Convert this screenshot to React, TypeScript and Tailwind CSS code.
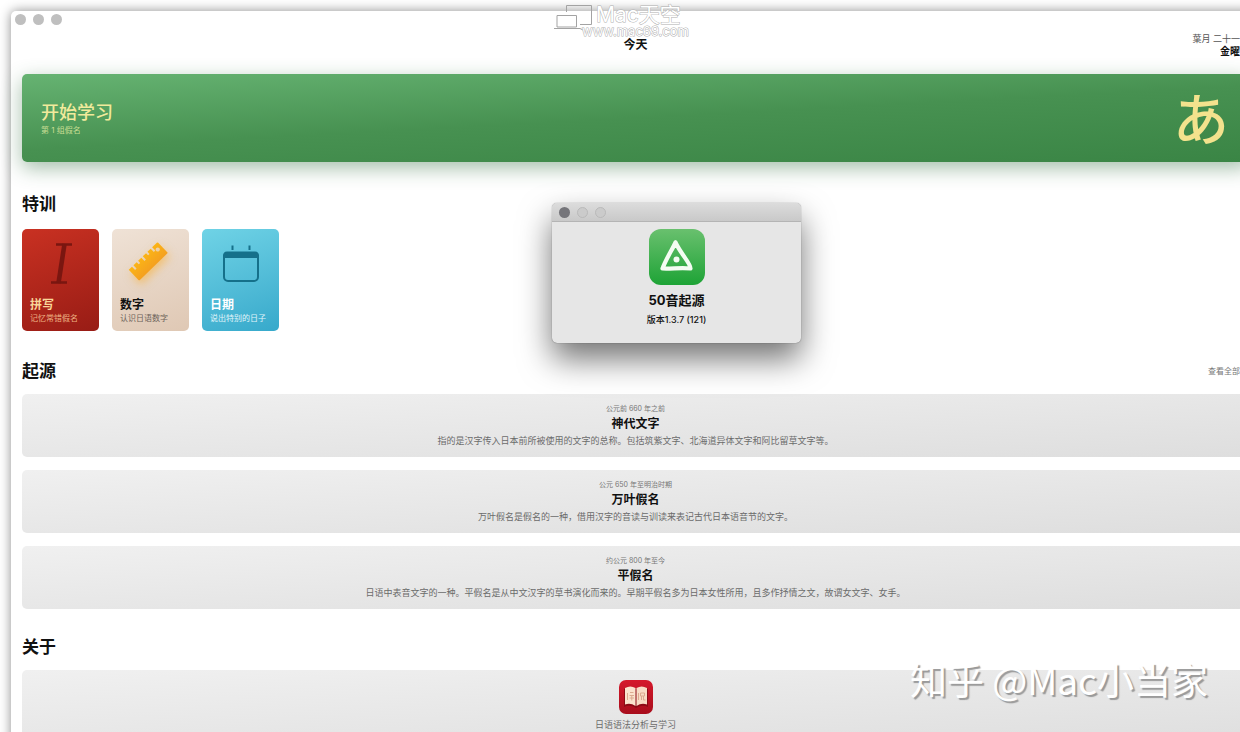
import type { ReactNode } from 'react';
import { clsx } from 'clsx';

interface Training {
  title: string;
  subtitle: string;
  cardClass: string;
  titleClass: string;
  subtitleClass: string;
  icon: ReactNode;
}

interface Origin {
  period: string;
  title: string;
  description: string;
}

function ItalicIcon() {
  return (
    <svg width="56" height="48" viewBox="0 0 56 48" fill="none" stroke="#7a1610" aria-hidden="true">
      <path d="M23 5.5H39M18 43.5H34" strokeWidth="2.6" />
      <path d="M31.5 5L25.5 44" strokeWidth="4.6" />
    </svg>
  );
}

function RulerIcon() {
  return (
    <svg width="56" height="48" viewBox="0 0 56 48" className="overflow-visible drop-shadow-[2px_4px_4px_rgba(250,170,30,0.5)]" aria-hidden="true">
      <defs>
        <linearGradient id="ruler" x1="0" y1="0" x2="0" y2="1">
          <stop offset="0" stopColor="#fbb416" />
          <stop offset="1" stopColor="#f4a01f" />
        </linearGradient>
      </defs>
      <g transform="translate(25 22) rotate(-44)">
        <path
          fill="url(#ruler)"
          fillRule="evenodd"
          d="M-20 -7H-15.5V-2.5H-13.5V-7H-9V-4H-7V-7H-2.5V-2.5H-.5V-7H4V-4H6V-7H10.5V-2.5H12.5V-7H19Q20 -7 20 -6V7Q20 8 19 8H-19Q-20 8 -20 7ZM15 -3.5A2 2 0 1 0 15 .5A2 2 0 1 0 15 -3.5Z"
        />
      </g>
    </svg>
  );
}

function CalendarIcon() {
  return (
    <svg width="56" height="48" viewBox="0 0 56 48" fill="none" aria-hidden="true">
      <rect x="11" y="14" width="34" height="28" rx="4" stroke="#15708a" strokeWidth="2" />
      <path d="M10 19V17Q10 12.5 14 12.5H42Q46 12.5 46 17V19Z" fill="#15708a" />
      <path d="M19.5 6.5V11M36.5 6.5V11" stroke="#15708a" strokeWidth="2" />
    </svg>
  );
}

function AppIcon() {
  return (
    <svg width="56" height="56" viewBox="0 0 56 56" fill="none" aria-hidden="true">
      <defs>
        <linearGradient id="app" x1="0" y1="0" x2="0" y2="1">
          <stop offset="0" stopColor="#69c06e" />
          <stop offset="1" stopColor="#1ea336" />
        </linearGradient>
      </defs>
      <rect width="56" height="56" rx="12" fill="url(#app)" />
      <path
        d="M26.5 13.5C23 21 17 30 13.5 39.5C22 40 32 38.5 41.5 39.5C42 35 32 25 26.5 13.5"
        stroke="#f4fcf2"
        strokeWidth="4.2"
        strokeLinecap="round"
        strokeLinejoin="round"
      />
      <circle cx="27.5" cy="30.5" r="3" fill="#f4fcf2" />
    </svg>
  );
}

function DictionaryIcon() {
  return (
    <svg width="34" height="34" viewBox="0 0 34 34" fill="none" aria-hidden="true">
      <defs>
        <linearGradient id="book" x1="0" y1="0" x2="0" y2="1">
          <stop offset="0" stopColor="#d5192b" />
          <stop offset="1" stopColor="#a80d1c" />
        </linearGradient>
      </defs>
      <rect width="34" height="34" rx="7" fill="url(#book)" />
      <path d="M5 27V9Q11 5 17 9Q23 5 29 9V27Q23 24 17 28Q11 24 5 27Z" fill="#8d0a15" />
      <path d="M6 24.5V8Q11.5 5 16.5 8V26Q11.5 22.5 6 24.5Z" fill="#fbe3cd" />
      <path d="M28 24.5V8Q22.5 5 17.5 8V26Q22.5 22.5 28 24.5Z" fill="#f8dcc5" />
      <path d="M8.5 13V20M11 12.5H14.5M10.5 15.5H15M12.8 15.5V20.5M10.5 18H15" stroke="#dcab90" />
      <path d="M19.5 13V20M21.5 13H25.5V16H21.5ZM22.5 16V20M24.5 16V20H26.5" stroke="#dcab90" />
    </svg>
  );
}

const trainings: Training[] = [
  {
    title: '拼写',
    subtitle: '记忆常错假名',
    cardClass: 'from-[#c93122] to-[#981c15]',
    titleClass: 'text-[#f9d79a]',
    subtitleClass: 'text-[#eeb184]',
    icon: <ItalicIcon />,
  },
  {
    title: '数字',
    subtitle: '认识日语数字',
    cardClass: 'from-[#efe2d6] to-[#dfc8b4]',
    titleClass: 'text-[#111111]',
    subtitleClass: 'text-[#6c6259]',
    icon: <RulerIcon />,
  },
  {
    title: '日期',
    subtitle: '说出特别的日子',
    cardClass: 'from-[#6fd3e6] to-[#36a9cb]',
    titleClass: 'text-white',
    subtitleClass: 'text-[#e0f5fa]',
    icon: <CalendarIcon />,
  },
];

const origins: Origin[] = [
  {
    period: '公元前 660 年之前',
    title: '神代文字',
    description: '指的是汉字传入日本前所被使用的文字的总称。包括筑紫文字、北海道异体文字和阿比留草文字等。',
  },
  {
    period: '公元 650 年至明治时期',
    title: '万叶假名',
    description: '万叶假名是假名的一种，借用汉字的音读与训读来表记古代日本语音节的文字。',
  },
  {
    period: '约公元 800 年至今',
    title: '平假名',
    description: '日语中表音文字的一种。平假名是从中文汉字的草书演化而来的。早期平假名多为日本女性所用，且多作抒情之文，故谓女文字、女手。',
  },
];

function WindowButtons({ dialog = false }: { dialog?: boolean }) {
  return (
    <div className="flex gap-[7px]">
      {['关闭', '最小化', '缩放'].map((label, i) => (
        <button
          key={label}
          aria-label={label}
          className={clsx(
            'size-[11px] rounded-full',
            !dialog && 'bg-[#bfbfbf]',
            dialog && i === 0 && 'bg-[#75757a]',
            dialog && i > 0 && 'border border-[#b9b9b9] bg-[#cbcbcb]',
          )}
        />
      ))}
    </div>
  );
}

function SectionTitle({ children }: { children: ReactNode }) {
  return <h2 className="text-[17px] leading-6 font-bold">{children}</h2>;
}

function TrainingCard({ item }: { item: Training }) {
  return (
    <button
      className={clsx(
        'flex h-[102px] w-[77px] flex-col rounded-[5px] bg-linear-160 px-2 pt-[10px] text-left',
        item.cardClass,
      )}
    >
      <span className="self-center">{item.icon}</span>
      <span className={clsx('mt-[10px] text-[12px] leading-4 font-bold', item.titleClass)}>{item.title}</span>
      <span className={clsx('text-[8px] leading-[10px] whitespace-nowrap', item.subtitleClass)}>{item.subtitle}</span>
    </button>
  );
}

function OriginCard({ item }: { item: Origin }) {
  return (
    <article className="flex flex-col items-center rounded-[5px] bg-linear-177 from-[#f0f0f0] to-[#dedede] py-[10px]">
      <p className="text-[7px] leading-[10px] text-[#777777]">{item.period}</p>
      <h3 className="mt-0.5 text-[12px] leading-4 font-bold">{item.title}</h3>
      <p className="mt-[3px] text-[9px] leading-3 text-[#6b6b6b]">{item.description}</p>
    </article>
  );
}

function AboutDialog() {
  return (
    <div
      role="dialog"
      aria-label="50音起源"
      className="absolute top-[203px] left-[552px] w-[249px] overflow-hidden rounded-[5px] bg-[#e6e6e6] shadow-[0_0_1px_rgba(0,0,0,0.6),0_16px_32px_rgba(0,0,0,0.55)]"
    >
      <div className="flex h-[19px] items-center border-b border-[#b4b4b4] bg-linear-to-b from-[#dcdcdc] to-[#c9c9c9] px-[7px]">
        <WindowButtons dialog />
      </div>
      <div className="flex flex-col items-center pt-[7px] pb-[17px]">
        <AppIcon />
        <h2 className="mt-[7px] text-[13px] leading-4 font-bold">50音起源</h2>
        <p className="mt-[6px] text-[9px] leading-3 font-medium">版本1.3.7 (121)</p>
      </div>
    </div>
  );
}

function SiteMark() {
  return (
    <div className="pointer-events-none absolute top-0 left-[554px] flex">
      <svg width="40" height="32" viewBox="0 0 40 32" fill="none" stroke="#a3a3a3" aria-hidden="true">
        <path d="M12.5 12V5.5H37.5V24.5H26" />
        <path d="M3 15.5H22.5V27H3Z" fill="#ffffff" fillOpacity="0.5" />
        <path d="M0 28.5H26L29 30" />
      </svg>
      <div className="-ml-3 flex flex-col text-white">
        <span className="ml-[14px] text-[21px] leading-[30px] [-webkit-text-stroke:1px_#b0b0b0] [paint-order:stroke_fill]">Mac天空</span>
        <span className="-mt-[5px] text-[13px] leading-3 [-webkit-text-stroke:1px_#b0b0b0] [paint-order:stroke_fill]">www.mac69.com</span>
      </div>
    </div>
  );
}

export default function App() {
  return (
    <div className="relative h-screen overflow-hidden bg-white pt-[11px] pl-[11px] font-['Inter','Noto_Sans_CJK_SC',sans-serif] text-[#111111]">
      <main className="-mr-5 min-h-full rounded-tl-[5px] bg-white pb-6 shadow-[0_0_12px_rgba(0,0,0,0.45)]">
        <div className="flex h-4 items-center pl-1">
          <WindowButtons />
        </div>

        <div className="px-[11px]">
          <header className="grid h-9 grid-cols-3 items-center">
            <span />
            <h1 className="text-center text-[12px] leading-4 font-bold">今天</h1>
            <div className="pr-[9px] text-right font-['Inter','Noto_Sans_CJK_JP',sans-serif]">
              <p className="text-[9px] leading-3 text-[#555555]">葉月 二十一</p>
              <p className="text-[10px] leading-3 font-bold">金曜</p>
            </div>
          </header>

          <button className="mt-[11px] flex h-[88px] w-full items-center justify-between rounded-[5px] bg-linear-177 from-[#66b372] via-[#479151] to-[#3a8545] pr-5 pl-[19px] text-left shadow-[0_6px_20px_rgba(50,110,65,0.45)]">
            <span className="flex flex-col">
              <span className="text-[18px] leading-6 font-medium text-[#f1ea9c]">开始学习</span>
              <span className="text-[8px] leading-[10px] text-[#c9de94]">第 1 组假名</span>
            </span>
            <span className="pb-1 font-['Noto_Sans_CJK_JP',sans-serif] text-[56px] leading-none font-medium text-[#f3e28d]">あ</span>
          </button>

          <section className="mt-[30px]">
            <SectionTitle>特训</SectionTitle>
            <div className="mt-[13px] flex gap-[13px]">
              {trainings.map((item) => (
                <TrainingCard key={item.title} item={item} />
              ))}
            </div>
          </section>

          <section className="mt-7">
            <div className="flex items-center justify-between">
              <SectionTitle>起源</SectionTitle>
              <a href="#origins" className="pr-[9px] text-[8px] leading-3 text-[#777777]">
                查看全部
              </a>
            </div>
            <div id="origins" className="mt-[11px] flex flex-col gap-[13px]">
              {origins.map((item) => (
                <OriginCard key={item.title} item={item} />
              ))}
            </div>
          </section>

          <section className="mt-[26px]">
            <SectionTitle>关于</SectionTitle>
            <div className="mt-[11px] flex flex-col items-center rounded-[5px] bg-linear-177 from-[#f0f0f0] to-[#dedede] pt-[10px] pb-4">
              <DictionaryIcon />
              <p className="mt-[5px] text-[9px] leading-3 text-[#6b6b6b]">日语语法分析与学习</p>
            </div>
          </section>
        </div>
      </main>

      <AboutDialog />
      <SiteMark />
      <div className="pointer-events-none absolute right-8 bottom-7 font-['Noto_Sans_CJK_SC',sans-serif] text-[37px] leading-[50px] whitespace-nowrap text-white [text-shadow:2px_2px_1px_#999999]">
        知乎 @Mac小当家
      </div>
    </div>
  );
}
